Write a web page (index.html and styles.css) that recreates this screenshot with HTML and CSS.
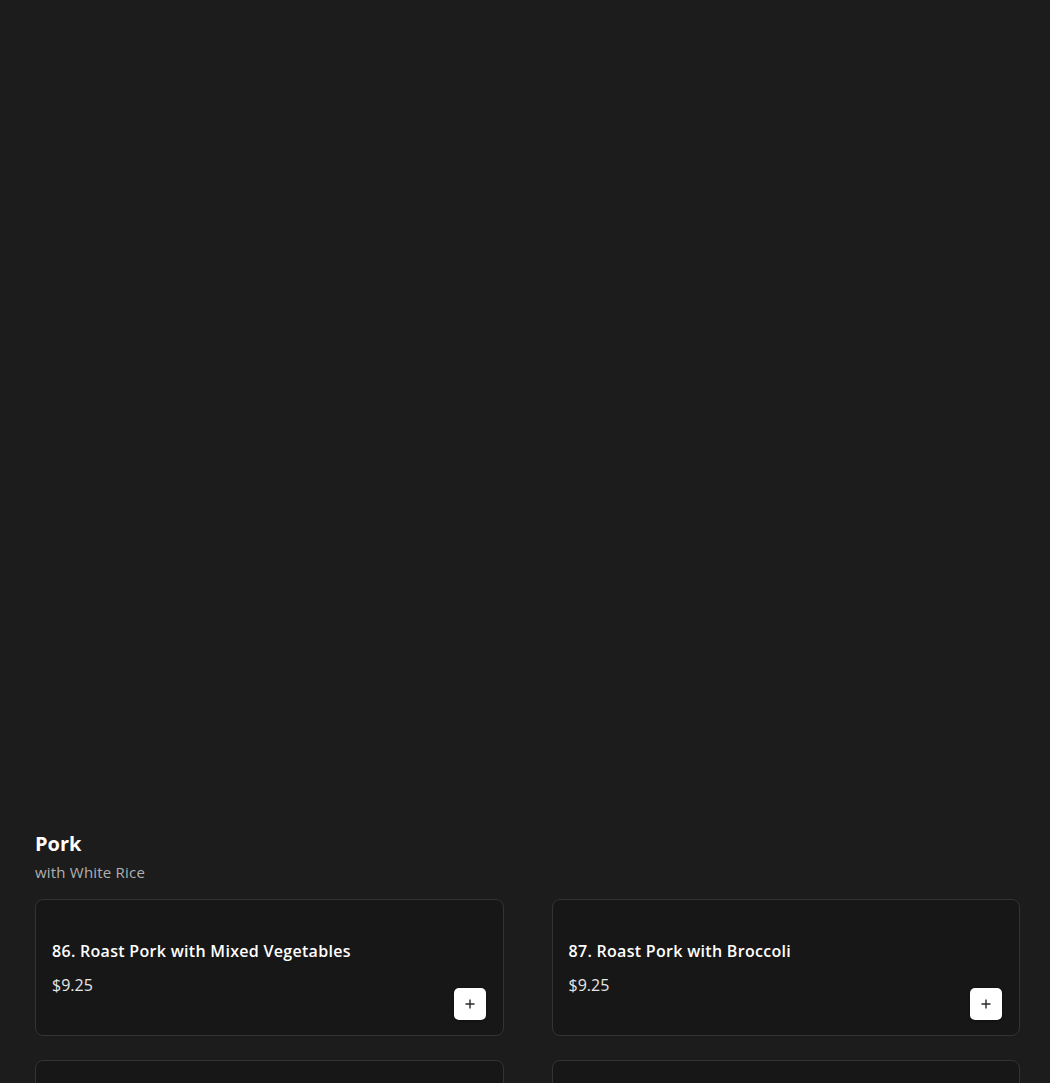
FILE: index.html
```html
<!DOCTYPE html>
<html lang="en">
<head>
    <meta charset="UTF-8">
    <meta name="viewport" content="width=device-width, initial-scale=1.0">
    <title>Menu - Pork</title>
    <link rel="stylesheet" href="styles.css">
</head>
<body>
    <div class="page">
        <div class="hero"></div>

        <section class="menu-section">
            <h2 class="section-title">Pork</h2>
            <p class="section-note">with White Rice</p>

            <div class="item-grid">
                <div class="item-card">
                    <div class="item-info">
                        <h3 class="item-name">86. Roast Pork with Mixed Vegetables</h3>
                        <div class="item-price">$9.25</div>
                    </div>
                    <button type="button" class="add-btn" aria-label="Add">
                        <svg width="12" height="12" viewBox="0 0 12 12"><path d="M6 1.5v9M1.5 6h9" stroke="#2a2a2a" stroke-width="1.4" fill="none"/></svg>
                    </button>
                </div>
                <div class="item-card">
                    <div class="item-info">
                        <h3 class="item-name">87. Roast Pork with Broccoli</h3>
                        <div class="item-price">$9.25</div>
                    </div>
                    <button type="button" class="add-btn" aria-label="Add">
                        <svg width="12" height="12" viewBox="0 0 12 12"><path d="M6 1.5v9M1.5 6h9" stroke="#2a2a2a" stroke-width="1.4" fill="none"/></svg>
                    </button>
                </div>
                <div class="item-card">
                    <div class="item-info">
                        <h3 class="item-name">88. Roast Pork with Snow Peas</h3>
                        <div class="item-price">$9.25</div>
                    </div>
                    <button type="button" class="add-btn" aria-label="Add">
                        <svg width="12" height="12" viewBox="0 0 12 12"><path d="M6 1.5v9M1.5 6h9" stroke="#2a2a2a" stroke-width="1.4" fill="none"/></svg>
                    </button>
                </div>
                <div class="item-card">
                    <div class="item-info">
                        <h3 class="item-name">89. Roast Pork with Bean Sprouts</h3>
                        <div class="item-price">$9.25</div>
                    </div>
                    <button type="button" class="add-btn" aria-label="Add">
                        <svg width="12" height="12" viewBox="0 0 12 12"><path d="M6 1.5v9M1.5 6h9" stroke="#2a2a2a" stroke-width="1.4" fill="none"/></svg>
                    </button>
                </div>
            </div>
        </section>
    </div>
</body>
</html>
```

FILE: styles.css
```css
body {
    font-family: 'Open Sans', 'Noto Sans', sans-serif;
    background-color: #1c1c1c;
    color: #fff;
    margin: 0;
}
.page {
    padding: 0 30px 0 35px;
}
.hero {
    height: 830px;
}
.section-title {
    font-size: 20px;
    line-height: 28px;
    font-weight: 700;
    margin: 0;
    color: #fff;
}
.section-note {
    font-size: 15px;
    line-height: 20px;
    margin: 4px 0 0 0;
    color: #b0b0b0;
    letter-spacing: 0.2px;
}
.item-grid {
    display: grid;
    grid-template-columns: 1fr 1fr;
    column-gap: 48px;
    row-gap: 24px;
    margin-top: 17px;
}
.item-card {
    box-sizing: border-box;
    height: 137px;
    display: flex;
    justify-content: space-between;
    padding: 39px 17px 15px 16px;
    background: #171717;
    border: 1px solid #333;
    border-radius: 8px;
}
.item-info {
    align-self: flex-start;
}
.item-name {
    font-size: 16px;
    line-height: 24px;
    font-weight: 600;
    letter-spacing: 0.3px;
    margin: 0;
    color: #fff;
}
.item-price {
    font-size: 16px;
    line-height: 22px;
    margin-top: 11px;
    color: #e6e6e6;
}
.add-btn {
    align-self: flex-end;
    width: 32px;
    height: 32px;
    padding: 0;
    border: none;
    border-radius: 5px;
    background: #fff;
    box-shadow: 0 1px 3px rgba(0,0,0,0.4);
    display: flex;
    align-items: center;
    justify-content: center;
    cursor: pointer;
}
```
